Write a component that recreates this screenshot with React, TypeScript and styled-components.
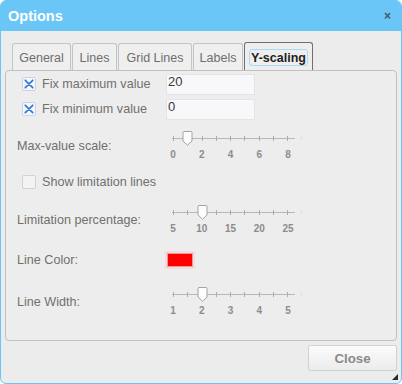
import React from "react";
import styled, { createGlobalStyle } from "styled-components";

const GlobalStyle = createGlobalStyle`
  html, body {
    margin: 0;
    padding: 0;
    background: #ffffff;
  }
  body {
    font-family: "Liberation Sans", Arial, sans-serif;
  }
`;

const Dialog = styled.div`
  position: relative;
  box-sizing: border-box;
  width: 402px;
  height: 384px;
  border: 1px solid #6ac6f6;
  border-radius: 6px;
  background: #ececec;
  display: flex;
  flex-direction: column;
  overflow: hidden;
`;

const TitleBar = styled.div`
  flex: none;
  height: 30px;
  background: #6ac6f6;
  display: flex;
  align-items: center;
  justify-content: space-between;
  padding: 0 10px 0 7px;
`;

const Title = styled.span`
  color: #ffffff;
  font-weight: bold;
  font-size: 14.5px;
`;

const CloseX = styled.span`
  color: #44576a;
  font-weight: bold;
  font-size: 12px;
  line-height: 1;
`;

const Body = styled.div`
  flex: 1;
  display: flex;
  flex-direction: column;
  padding: 0 4px;
`;

const TabList = styled.div`
  display: flex;
  align-items: flex-end;
  gap: 1px;
  height: 28px;
  margin: 11px 0 0 7px;
`;

const Tab = styled.div<{ $w: number; $active?: boolean }>`
  box-sizing: border-box;
  width: ${(p) => p.$w}px;
  height: ${(p) => (p.$active ? 28 : 27)}px;
  display: flex;
  align-items: center;
  justify-content: center;
  border: 1px solid ${(p) => (p.$active ? "#707070" : "#c4c4c4")};
  border-bottom: none;
  border-radius: 3px 3px 0 0;
  background: ${(p) => (p.$active ? "#eeeeee" : "#efefef")};
  color: ${(p) => (p.$active ? "#1e1e1e" : "#6e6e6e")};
  font-size: 12.5px;
  font-weight: ${(p) => (p.$active ? "bold" : "normal")};
  padding-top: 1px;
`;

const FocusRing = styled.span`
  border: 1px solid #a9d9f5;
  border-radius: 3px;
  padding: 1px 1px 0;
`;

const Panel = styled.div`
  box-sizing: border-box;
  flex: none;
  height: 271px;
  border: 1px solid #c0c0c0;
  border-radius: 4px;
  background: #ededed;
  padding-top: 1px;
  display: flex;
  flex-direction: column;
`;

const Row = styled.div<{ $h?: number; $mt?: number }>`
  display: grid;
  grid-template-columns: 160px 1fr;
  align-items: center;
  height: ${(p) => p.$h ?? 24}px;
  margin-top: ${(p) => p.$mt ?? 0}px;
`;

const Label = styled.span`
  padding-left: 11px;
  color: #707070;
  font-size: 12.6px;
`;

const CheckLabel = styled.label`
  display: flex;
  align-items: center;
  gap: 6px;
  padding-left: 16px;
  color: #707070;
  font-size: 12.6px;
`;

const Box = styled.span<{ $checked?: boolean }>`
  box-sizing: border-box;
  width: 14px;
  height: 14px;
  display: flex;
  align-items: center;
  justify-content: center;
  border: 1px solid ${(p) => (p.$checked ? "#c8d3e4" : "#d2d2d2")};
  border-radius: 2px;
  background: ${(p) => (p.$checked ? "#f5f7fb" : "#f3f3f3")};
`;

const TextInput = styled.div`
  box-sizing: border-box;
  width: 89px;
  height: 21px;
  background: #f8f8fb;
  border: 1px solid #e3e3e8;
  color: #3a3a3a;
  font-size: 13px;
  line-height: 14px;
  padding: 0 0 0 1px;
`;

const SliderWrap = styled.div`
  width: 150px;
  height: 30px;
  display: flex;
  flex-direction: column;
`;

const Rail = styled.div`
  position: relative;
  height: 16px;
  &::before {
    content: "";
    position: absolute;
    left: 6px;
    width: 123px;
    top: 7px;
    height: 1px;
    background: #b8b8b8;
  }
  &::after {
    content: "";
    position: absolute;
    left: 135px;
    top: 6px;
    width: 1px;
    height: 3px;
    background: #dcdcdc;
  }
`;

const Ticks = styled.div`
  position: absolute;
  left: 7px;
  top: 5px;
  width: 115px;
  height: 5px;
  display: flex;
  justify-content: space-between;
`;

const Tick = styled.span`
  width: 1px;
  height: 5px;
  background: #adadad;
`;

const Handle = styled.svg`
  position: absolute;
  top: 0;
`;

const Scale = styled.div`
  margin: 2px 0 0 7px;
  width: 115px;
  height: 12px;
  display: flex;
  justify-content: space-between;
`;

const ScaleLabel = styled.span`
  width: 0;
  display: flex;
  justify-content: center;
  white-space: nowrap;
  color: #8c8c8c;
  font-size: 10px;
  font-weight: bold;
  line-height: 12px;
`;

const Swatch = styled.span<{ $color: string }>`
  box-sizing: border-box;
  width: 26px;
  height: 14px;
  margin-left: 1px;
  background: ${(p) => p.$color};
  border: 1px solid #e89a9a;
  box-shadow: 0 0 0 2px #f4dcdc;
`;

const Footer = styled.div`
  display: flex;
  justify-content: flex-end;
  margin-top: 4px;
`;

const Button = styled.button`
  box-sizing: border-box;
  width: 89px;
  height: 26px;
  border: 1px solid #d2d2d2;
  border-radius: 2px;
  background: linear-gradient(#fbfbfb, #ececec);
  color: #8a8a8a;
  font-family: "Liberation Sans", Arial, sans-serif;
  font-size: 13.3px;
  font-weight: bold;
`;

const Grip = styled.svg`
  position: absolute;
  right: 3px;
  bottom: 3px;
`;

const CheckMark = () => (
  <svg width="10" height="10" viewBox="0 0 10 10">
    <path
      d="M1.3 1.3 L8.7 8.7 M8.7 1.3 L1.3 8.7"
      stroke="#3a7bd8"
      strokeWidth="1.8"
      strokeLinecap="round"
    />
  </svg>
);

type SliderProps = {
  labels: string[];
  index: number;
};

const Slider = ({ labels, index }: SliderProps) => {
  const left = 7 + index * 14.25 - 5;
  return (
    <SliderWrap>
      <Rail>
        <Ticks>
          {Array.from({ length: 9 }).map((_, i) => (
            <Tick key={i} />
          ))}
        </Ticks>
        <Handle width="11" height="15" viewBox="0 0 11 15" style={{ left }}>
          <path
            d="M1 1.5 Q1 0.5 2 0.5 L9 0.5 Q10 0.5 10 1.5 L10 10 L5.5 14.2 L1 10 Z"
            fill="#fdfdfd"
            stroke="#a3a3a3"
            strokeWidth="1"
          />
        </Handle>
      </Rail>
      <Scale>
        {labels.map((l) => (
          <ScaleLabel key={l}>{l}</ScaleLabel>
        ))}
      </Scale>
    </SliderWrap>
  );
};

const tabs = [
  { name: "General", w: 59 },
  { name: "Lines", w: 45 },
  { name: "Grid Lines", w: 74 },
  { name: "Labels", w: 50 },
  { name: "Y-scaling", w: 69, active: true },
];

const App = () => {
  return (
    <>
      <GlobalStyle />
      <Dialog>
        <TitleBar>
          <Title>Options</Title>
          <CloseX>×</CloseX>
        </TitleBar>
        <Body>
          <TabList>
            {tabs.map((t) => (
              <Tab key={t.name} $w={t.w} $active={t.active}>
                {t.active ? <FocusRing>{t.name}</FocusRing> : t.name}
              </Tab>
            ))}
          </TabList>
          <Panel>
            <Row>
              <CheckLabel>
                <Box $checked>
                  <CheckMark />
                </Box>
                Fix maximum value
              </CheckLabel>
              <TextInput>20</TextInput>
            </Row>
            <Row $mt={1}>
              <CheckLabel>
                <Box $checked>
                  <CheckMark />
                </Box>
                Fix minimum value
              </CheckLabel>
              <TextInput>0</TextInput>
            </Row>
            <Row $h={30} $mt={10}>
              <Label>Max-value scale:</Label>
              <Slider labels={["0", "2", "4", "6", "8"]} index={1} />
            </Row>
            <Row $mt={9}>
              <CheckLabel>
                <Box />
                Show limitation lines
              </CheckLabel>
            </Row>
            <Row $h={30} $mt={11}>
              <Label>Limitation percentage:</Label>
              <Slider labels={["5", "10", "15", "20", "25"]} index={2} />
            </Row>
            <Row $mt={13}>
              <Label>Line Color:</Label>
              <Swatch $color="#ff0000" />
            </Row>
            <Row $h={30} $mt={15}>
              <Label>Line Width:</Label>
              <Slider labels={["1", "2", "3", "4", "5"]} index={2} />
            </Row>
          </Panel>
          <Footer>
            <Button>Close</Button>
          </Footer>
        </Body>
        <Grip width="6" height="6" viewBox="0 0 6 6">
          <path d="M6 0 L6 6 L0 6 Z" fill="#2a2a2a" />
        </Grip>
      </Dialog>
    </>
  );
};

export default App;
